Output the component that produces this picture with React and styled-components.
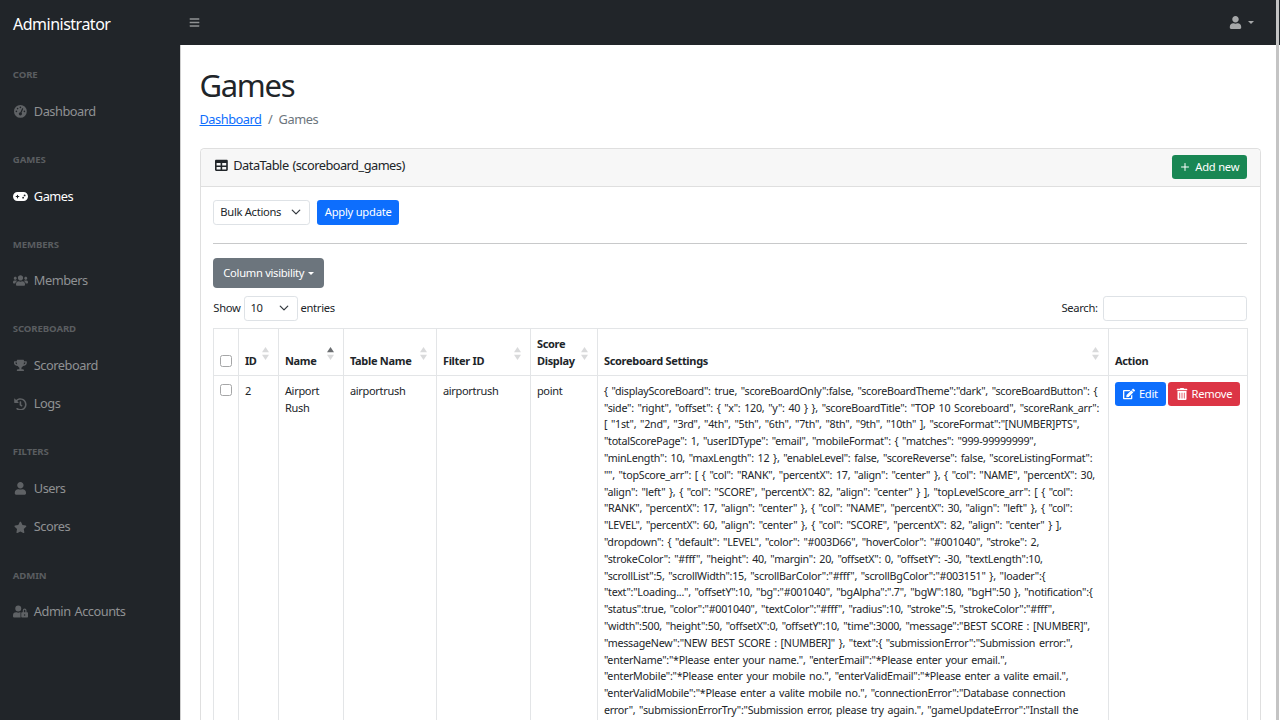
import React from "react";
import styled, { createGlobalStyle } from "styled-components";
import {
  FaUsers, FaTrophy, FaHistory, FaUser, FaStar, FaUserLock,
  FaBars, FaTable, FaEdit, FaTrashAlt,
} from "react-icons/fa";
import { FaGaugeHigh, FaGamepad } from "react-icons/fa6";
import { Plus } from "lucide-react";

const Global = createGlobalStyle`
  html, body { margin: 0; padding: 0; height: 720px; overflow: hidden; background: #fff; }
  * { box-sizing: border-box; }
  body { font-family: "Noto Sans", "Open Sans", sans-serif; font-size: 12.8px; line-height: 1.5; color: #212529; letter-spacing: -0.4px; }
`;

const Page = styled.div`display: flex; flex-direction: column; height: 720px; overflow: hidden;`;
const Topbar = styled.header`display: flex; align-items: center; height: 45px; flex: none; background: #212529;`;
const Brand = styled.div`width: 180px; padding: 2px 0 0 13px; font-size: 16px; color: #fff; letter-spacing: -0.5px;`;
const Toggle = styled.span`display: flex; margin-left: 9px; color: #909294; font-size: 11px;`;
const UserMenu = styled.div`display: flex; align-items: center; gap: 6px; margin-left: auto; margin-right: 26px; color: #a6a8a9; font-size: 13px;`;
const Caret = styled.span`
  display: inline-block; width: 0; height: 0;
  border-top: 3.5px solid ${(p) => p.$color || "#a6a8a9"};
  border-left: 3.5px solid transparent; border-right: 3.5px solid transparent;
`;
const Body = styled.div`display: flex; flex: 1; min-height: 0;`;
const Sidebar = styled.nav`width: 180px; flex: none; padding-top: 1px; background: #212529;`;
const NavHeading = styled.div`padding: 22.3px 12.8px 9.6px; font-size: 9.6px; line-height: 14.4px; font-weight: 700; color: #5a5d60; letter-spacing: -0.1px;`;
const NavLink = styled.a`
  display: flex; align-items: center; height: 38.4px; padding: 0 12.8px;
  font-size: 12.8px; letter-spacing: -0.48px; word-spacing: 1px; color: ${(p) => (p.$active ? "#fff" : "#8f9193")};
`;
const NavIcon = styled.span`
  display: flex; justify-content: center; align-items: center; width: 16px; margin-right: 5px; font-size: ${(p) => (p.$wide ? 15 : 12.8)}px;
  color: ${(p) => (p.$active ? "#fff" : "#5f6265")};
`;
const Main = styled.main`flex: 1; min-width: 0; padding: 0 19.5px 0 18.5px; border-left: 1px solid #cfcfcf; overflow: hidden;`;
const Title = styled.h1`margin: 20.5px 0 6px; font-size: 31px; line-height: 38.4px; font-weight: 400; color: #212529; letter-spacing: -1.3px;`;
const Breadcrumb = styled.div`display: flex; gap: 6.4px; margin-bottom: 18.5px; height: 19.2px; letter-spacing: -0.47px; color: #6c757d;`;
const Crumb = styled.a`color: #0d6efd; text-decoration: underline;`;
const Card = styled.section`border: 1px solid #dfdfdf; border-bottom: 0; border-radius: 4.5px 4.5px 0 0;`;
const CardHeader = styled.div`
  display: flex; align-items: center; justify-content: space-between; height: 38px; padding: 0 12.8px 0 14.5px;
  background: #f7f7f7; border-bottom: 1px solid #dfdfdf; border-radius: 4.5px 4.5px 0 0;
`;
const CardTitle = styled.div`display: flex; align-items: center; gap: 5.5px; margin-top: -4px; letter-spacing: -0.52px; word-spacing: 1px; color: #212529;`;
const CardBody = styled.div`padding: 13.5px 12.8px 0;`;
const Btn = styled.button`
  display: inline-flex; align-items: center; justify-content: center; gap: ${(p) => p.$gap || 5}px;
  ${(p) => (p.$w ? `width: ${p.$w}px;` : "")} height: 24.5px; padding: 0 7.5px;
  border: 0; border-radius: 3.2px; font: inherit; font-size: 11.2px; letter-spacing: -0.25px; color: #fff; background: ${(p) => p.$bg};
  svg { width: 12px; height: 12px; }
`;
const Row = styled.div`display: flex; align-items: center; gap: ${(p) => p.$gap || 6}px;`;
const SelectBox = styled.div`
  display: flex; align-items: center; justify-content: space-between; width: ${(p) => p.$w}px; height: 24.5px; padding: 0 8px 0 6px;
  border: 1px solid #dee2e6; border-radius: 3.2px; font-size: 11.2px; color: #212529; background: #fff; letter-spacing: -0.3px;
`;
const Chevron = () => (
  <svg width="10" height="10" viewBox="0 0 16 16" fill="none" stroke="#343a40" strokeWidth="2" strokeLinecap="round" strokeLinejoin="round"><path d="m2 5 6 6 6-6" /></svg>
);
const Rule = styled.hr`margin: 18px 0 14px; border: 0; border-top: 1px solid #c8c9ca;`;
const GrayButton = styled(Btn)`height: 30px; width: 111px; padding: 1px 0 0; border-radius: 4px; gap: 4px; letter-spacing: -0.3px;`;
const Controls = styled.div`display: flex; align-items: center; justify-content: space-between; margin: 8.5px 0 7.5px; font-size: 11.2px; letter-spacing: -0.3px;`;
const SearchInput = styled.div`width: 144px; height: 24.5px; border: 1px solid #dee2e6; border-radius: 3.2px;`;
const Table = styled.table`
  width: 1033.5px; table-layout: fixed; border-collapse: collapse; font-size: 11px; line-height: 16.8px; letter-spacing: -0.3px;
  th, td { border: 1px solid #e3e5e7; padding: 6.4px 6.4px 6.4px 5.6px; text-align: left; }
  th { position: relative; padding-top: 7.4px; padding-bottom: 5.4px; vertical-align: bottom; font-weight: 700; color: #212529; }
  td { vertical-align: top; }
`;
const CheckBox = styled.span`display: block; width: 12px; height: 12px; margin: ${(p) => p.$m || "0"}; border: 1px solid #a5a6a7; border-radius: 2.5px; background: #fff;`;
const Sort = styled.svg`position: absolute; right: 9px; top: 18px; width: 7px; height: 13px;`;
const SortMark = ({ active }) => (
  <Sort viewBox="0 0 7 13">
    <path d="M3.5 0 7 5.2H0Z" fill={active ? "#6b6e71" : "#d9dadb"} />
    <path d="M3.5 13 7 7.8H0Z" fill="#d9dadb" />
  </Sort>
);
const Line = styled.span`display: block; white-space: nowrap; font-size: 10.7px; letter-spacing: -0.24px; word-spacing: 1.2px;`;
const Actions = styled.div`display: flex; gap: 2px; margin-top: -1px; margin-left: 0;`;
const Scroll = styled.div`position: fixed; top: 0; right: 1px; width: 3px; height: 720px; background: #c4c4c4;`;

const nav = [
  { head: "CORE", items: [[FaGaugeHigh, "Dashboard"]] },
  { head: "GAMES", items: [[FaGamepad, "Games", true, true]] },
  { head: "MEMBERS", items: [[FaUsers, "Members", false, true]] },
  { head: "SCOREBOARD", items: [[FaTrophy, "Scoreboard"], [FaHistory, "Logs"]] },
  { head: "FILTERS", items: [[FaUser, "Users"], [FaStar, "Scores"]] },
  { head: "ADMIN", items: [[FaUserLock, "Admin Accounts", false, true]] },
];

const settings = [
  `{ "displayScoreBoard": true, "scoreBoardOnly":false, "scoreBoardTheme":"dark", "scoreBoardButton": {`,
  `"side": "right", "offset": { "x": 120, "y": 40 } }, "scoreBoardTitle": "TOP 10 Scoreboard", "scoreRank_arr":`,
  `[ "1st", "2nd", "3rd", "4th", "5th", "6th", "7th", "8th", "9th", "10th" ], "scoreFormat":"[NUMBER]PTS",`,
  `"totalScorePage": 1, "userIDType": "email", "mobileFormat": { "matches": "999-99999999",`,
  `"minLength": 10, "maxLength": 12 }, "enableLevel": false, "scoreReverse": false, "scoreListingFormat":`,
  `"", "topScore_arr": [ { "col": "RANK", "percentX": 17, "align": "center" }, { "col": "NAME", "percentX": 30,`,
  `"align": "left" }, { "col": "SCORE", "percentX": 82, "align": "center" } ], "topLevelScore_arr": [ { "col":`,
  `"RANK", "percentX": 17, "align": "center" }, { "col": "NAME", "percentX": 30, "align": "left" }, { "col":`,
  `"LEVEL", "percentX": 60, "align": "center" }, { "col": "SCORE", "percentX": 82, "align": "center" } ],`,
  `"dropdown": { "default": "LEVEL", "color": "#003D66", "hoverColor": "#001040", "stroke": 2,`,
  `"strokeColor": "#fff", "height": 40, "margin": 20, "offsetX": 0, "offsetY": -30, "textLength":10,`,
  `"scrollList":5, "scrollWidth":15, "scrollBarColor":"#fff", "scrollBgColor":"#003151" }, "loader":{`,
  `"text":"Loading...", "offsetY":10, "bg":"#001040", "bgAlpha":".7", "bgW":180, "bgH":50 }, "notification":{`,
  `"status":true, "color":"#001040", "textColor":"#fff", "radius":10, "stroke":5, "strokeColor":"#fff",`,
  `"width":500, "height":50, "offsetX":0, "offsetY":10, "time":3000, "message":"BEST SCORE : [NUMBER]",`,
  `"messageNew":"NEW BEST SCORE : [NUMBER]" }, "text":{ "submissionError":"Submission error:",`,
  `"enterName":"*Please enter your name.", "enterEmail":"*Please enter your email.",`,
  `"enterMobile":"*Please enter your mobile no.", "enterValidEmail":"*Please enter a valite email.",`,
  `"enterValidMobile":"*Please enter a valite mobile no.", "connectionError":"Database connection`,
  `error", "submissionErrorTry":"Submission error, please try again.", "gameUpdateError":"Install the`,
];

const columns = [
  { w: 25 }, { w: 40, label: "ID", sort: true }, { w: 65, label: "Name", sort: true, active: true },
  { w: 93, label: "Table Name", sort: true }, { w: 94, label: "Filter ID", sort: true },
  { w: 67, label: <>Score<br />Display</>, sort: true }, { w: 511, label: "Scoreboard Settings", sort: true },
  { w: 138.5, label: "Action" },
];

export default function App() {
  return (
    <Page>
      <Global />
      <Topbar>
        <Brand>Administrator</Brand>
        <Toggle><FaBars /></Toggle>
        <UserMenu><FaUser /><Caret /></UserMenu>
      </Topbar>
      <Body>
        <Sidebar>
          {nav.map((g) => (
            <div key={g.head}>
              <NavHeading>{g.head}</NavHeading>
              {g.items.map(([Icon, label, active, wide]) => (
                <NavLink key={label} $active={active}>
                  <NavIcon $active={active} $wide={wide}><Icon /></NavIcon>
                  {label}
                </NavLink>
              ))}
            </div>
          ))}
        </Sidebar>
        <Main>
          <Title>Games</Title>
          <Breadcrumb><Crumb>Dashboard</Crumb><span>/</span><span>Games</span></Breadcrumb>
          <Card>
            <CardHeader>
              <CardTitle><FaTable />DataTable (scoreboard_games)</CardTitle>
              <Btn $bg="#198754" $gap={4}><Plus strokeWidth={2} />Add new</Btn>
            </CardHeader>
            <CardBody>
              <Row $gap={7}>
                <SelectBox $w={97}>Bulk Actions<Chevron /></SelectBox>
                <Btn $bg="#0d6efd">Apply update</Btn>
              </Row>
              <Rule />
              <GrayButton $bg="#6c757d">Column visibility <Caret $color="#fff" /></GrayButton>
              <Controls>
                <Row $gap={3}>Show<SelectBox $w={54}>10<Chevron /></SelectBox>entries</Row>
                <Row $gap={5}>Search:<SearchInput /></Row>
              </Controls>
              <Table>
                <colgroup>{columns.map((c, i) => <col key={i} width={c.w} />)}</colgroup>
                <thead>
                  <tr>
                    {columns.map((c, i) => (
                      <th key={i}>
                        {c.label || (i === 0 ? <CheckBox $m="0 0 3px" /> : null)}
                        {c.sort && <SortMark active={c.active} />}
                      </th>
                    ))}
                  </tr>
                </thead>
                <tbody>
                  <tr>
                    <td><CheckBox $m="1px 0 0" /></td>
                    <td>2</td>
                    <td>Airport<br />Rush</td>
                    <td>airportrush</td>
                    <td>airportrush</td>
                    <td>point</td>
                    <td>{settings.map((l) => <Line key={l}>{l}</Line>)}</td>
                    <td>
                      <Actions>
                        <Btn $bg="#0d6efd" $w={51} $gap={4}><FaEdit />Edit</Btn>
                        <Btn $bg="#dc3545" $w={72} $gap={4}><FaTrashAlt />Remove</Btn>
                      </Actions>
                    </td>
                  </tr>
                </tbody>
              </Table>
            </CardBody>
          </Card>
        </Main>
      </Body>
      <Scroll />
    </Page>
  );
}
